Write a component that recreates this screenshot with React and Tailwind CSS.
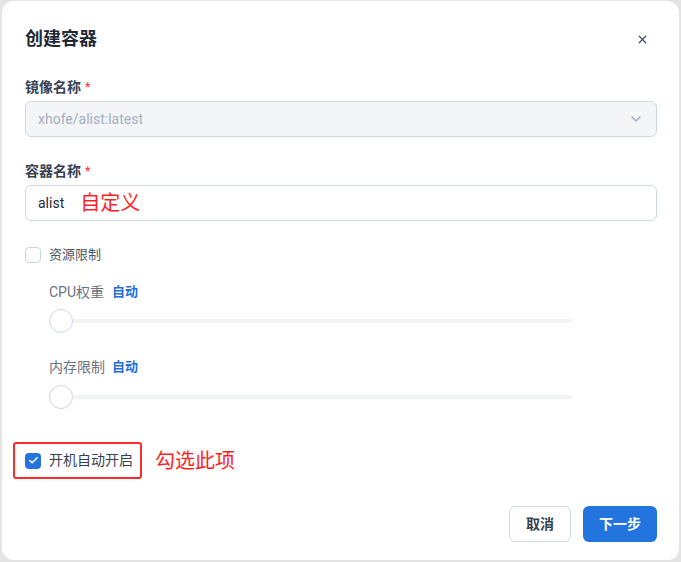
import { Check, ChevronDown, X } from "lucide-react";

const font = { fontFamily: 'Roboto, "Noto Sans CJK SC", sans-serif' };

function Slider() {
  return (
    <div className="flex items-center h-6 pl-6">
      <div className="w-6 h-6 rounded-full bg-white border-[1.5px] border-[#cdd6e2] shrink-0"></div>
      <div className="w-[499px] h-[4px] bg-[#f1f3f5] rounded-sm"></div>
    </div>
  );
}

export default function App() {
  return (
    <div className="w-[681px] h-[562px] bg-[#e4e4e4] pt-px pl-[2px]" style={font}>
      <div className="w-[677px] h-[559px] bg-white rounded-xl pt-6 pl-[23px] pr-[22px] flex flex-col">
        {/* Header */}
        <div className="flex items-center justify-between h-7">
          <h1 className="text-[18px] font-bold text-[#1f2937] leading-7">创建容器</h1>
          <X size={13} strokeWidth={2.2} className="text-[#3f4a5c] mr-2" />
        </div>

        {/* Image name */}
        <div className="mt-6 h-5 flex items-center text-[14px] font-semibold text-[#374151]">
          镜像名称<span className="text-[#ef4444] ml-1 text-[12px]">*</span>
        </div>
        <div className="mt-1 h-9 rounded-md border border-[#cfd8e3] bg-[#f4f5f7] flex items-center justify-between pl-3 pr-3">
          <span className="text-[14px] text-[#a3afc0]">xhofe/alist:latest</span>
          <ChevronDown size={16} strokeWidth={2} className="text-[#9aa8bb]" />
        </div>

        {/* Container name */}
        <div className="mt-6 h-5 flex items-center text-[14px] font-semibold text-[#374151]">
          容器名称<span className="text-[#ef4444] ml-1 text-[12px]">*</span>
        </div>
        <div className="mt-1 h-9 rounded-md border border-[#cfd8e3] bg-white flex items-center pl-3">
          <span className="text-[14px] text-[#1f2937]">alist</span>
          <span className="text-[20px] text-[#ff1f1f] ml-4 leading-none">自定义</span>
        </div>

        {/* Resource limit */}
        <div className="mt-6 h-5 flex items-center gap-2">
          <div className="w-4 h-4 rounded-[4px] border border-[#cbd5e1] bg-white"></div>
          <span className="text-[13px] text-[#4b5563]">资源限制</span>
        </div>

        <div className="mt-[17px] h-5 flex items-center pl-6 text-[14px]">
          <span className="text-[#6b7280]">CPU权重</span>
          <span className="ml-2 text-[13px] font-bold text-[#2470d8]">自动</span>
        </div>
        <div className="mt-[7px]">
          <Slider />
        </div>

        <div className="mt-6 h-5 flex items-center pl-6 text-[14px]">
          <span className="text-[#6b7280]">内存限制</span>
          <span className="ml-[7px] text-[13px] font-bold text-[#2470d8]">自动</span>
        </div>
        <div className="mt-2">
          <Slider />
        </div>

        {/* Auto start */}
        <div className="mt-[33px] flex items-center -ml-3">
          <div className="h-[37px] w-[129px] border-2 border-[#ff2b2b] rounded-[3px] flex items-center gap-2 pl-[10px]">
            <div className="w-4 h-4 rounded-[4px] bg-[#2474e0] flex items-center justify-center">
              <Check size={11} strokeWidth={3.5} className="text-white" />
            </div>
            <span className="text-[14px] text-[#374151]">开机自动开启</span>
          </div>
          <span className="ml-[13px] text-[20px] text-[#ff1f1f] leading-none">勾选此项</span>
        </div>

        {/* Footer */}
        <div className="mt-[27px] flex justify-end gap-3">
          <button className="h-9 w-[62px] rounded-md border border-[#cfd8e3] bg-white text-[14px] font-bold text-[#374151]">
            取消
          </button>
          <button className="h-9 w-[74px] rounded-md bg-[#2474e0] text-[14px] font-bold text-white">
            下一步
          </button>
        </div>
      </div>
    </div>
  );
}
